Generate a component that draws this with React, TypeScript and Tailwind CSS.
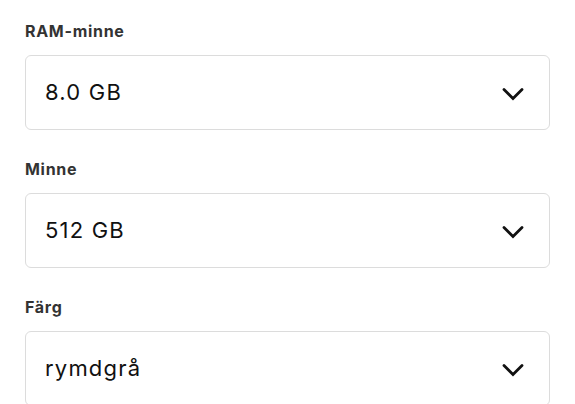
const fields = [
  { label: "RAM-minne", value: "8.0 GB" },
  { label: "Minne", value: "512 GB" },
  { label: "Färg", value: "rymdgrå" },
];

function Chevron() {
  return (
    <svg width="22" height="15" viewBox="0 0 22 15" fill="none" className="shrink-0 mt-[3px]">
      <polyline
        points="2,2.5 11,11.5 20,2.5"
        stroke="#111"
        strokeWidth="2.8"
        strokeLinecap="round"
        strokeLinejoin="miter"
      />
    </svg>
  );
}

export default function App() {
  return (
    <div className="w-[575px] h-[404px] overflow-hidden bg-white px-[25px] pt-[21px] font-['Inter','Liberation_Sans',sans-serif]">
      <div className="flex flex-col gap-[29px]">
        {fields.map((f) => (
          <div key={f.label}>
            <div className="text-[16px] leading-[20px] font-bold tracking-[0.7px] text-[#333] mb-[14px]">
              {f.label}
            </div>
            <div className="h-[75px] rounded-[6px] border border-[#dcdcdc] flex items-center justify-between pl-[19px] pr-[25px]">
              <span className="text-[22px] tracking-[1.2px] text-[#111]">{f.value}</span>
              <Chevron />
            </div>
          </div>
        ))}
      </div>
    </div>
  );
}
